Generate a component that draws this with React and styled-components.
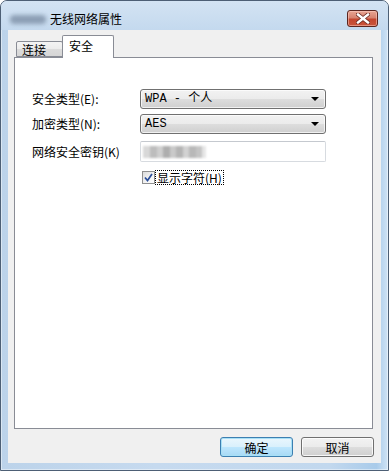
import React from "react";
import styled, { createGlobalStyle } from "styled-components";

const Global = createGlobalStyle`
  html, body { margin: 0; padding: 0; background: #ffffff; }
  body { font-family: "Noto Sans CJK SC", "Liberation Sans", sans-serif; font-size: 12px; }
`;

const Window = styled.div`
  box-sizing: border-box;
  width: 389px;
  height: 471px;
  border: 1px solid #4d5f75;
  border-radius: 7px 7px 0 0;
  background: linear-gradient(90deg, #bcd3ea 0%, #c6daef 40%, #c2d8ee 85%, #a9cbea 97%, #cfe3f5 100%);
  display: flex;
  flex-direction: column;
  overflow: hidden;
  box-shadow: inset 0 0 0 1px rgba(255,255,255,0.45);
`;

const TitleBar = styled.div`
  height: 29px;
  box-sizing: border-box;
  padding: 9px 10px 0 9px;
  display: flex;
  align-items: flex-start;
  background: linear-gradient(180deg, #d3e3f3 0%, #c4d9ee 100%);
`;

const BlurName = styled.span`
  width: 36px;
  height: 9px;
  margin-top: 5px;
  margin-right: 4px;
  border-radius: 4px;
  background: #7d8fa6;
  filter: blur(2px);
  opacity: 0.8;
`;

const Title = styled.span`
  font-size: 12px;
  line-height: 18px;
  color: #000;
`;

const CloseBtn = styled.div`
  margin-left: auto;
  width: 31px;
  height: 17px;
  box-sizing: border-box;
  border: 1px solid #5b2620;
  border-radius: 3px;
  background: linear-gradient(180deg, #e8a593 0%, #d78370 45%, #c4462f 55%, #c9553c 100%);
  box-shadow: inset 0 0 0 1px rgba(255,210,200,0.5);
  display: flex;
  align-items: center;
  justify-content: center;
`;

const Client = styled.div`
  flex: 1;
  margin: 0 7px 7px 7px;
  background: #f0f0f0;
  display: flex;
  flex-direction: column;
  padding: 4px 8px 0 6px;
`;

const TabStrip = styled.div`
  display: flex;
  align-items: flex-end;
  padding-left: 2px;
  height: 23px;
  position: relative;
  z-index: 1;
`;

const Tab = styled.div`
  box-sizing: border-box;
  height: ${(p) => (p.$active ? "23px" : "16px")};
  width: ${(p) => p.$w}px;
  border: 1px solid #898c95;
  border-bottom: ${(p) => (p.$active ? "none" : "1px solid #898c95")};
  border-radius: 2px 2px 0 0;
  background: ${(p) =>
    p.$active ? "#ffffff" : "linear-gradient(180deg, #f4f4f4 0%, #ececec 50%, #dcdcdc 51%, #d6d6d6 100%)"};
  margin-bottom: ${(p) => (p.$active ? "-1px" : "0")};
  padding-left: ${(p) => p.$pl}px;
  font-size: 12px;
  line-height: ${(p) => (p.$active ? "19px" : "16px")};
  color: #000;
  margin-right: ${(p) => (p.$active ? "0" : "-1px")};
`;

const Panel = styled.div`
  box-sizing: border-box;
  height: 372px;
  border: 1px solid #898c95;
  background: #ffffff;
  padding: 31px 0 0 17px;
`;

const Form = styled.div`
  display: grid;
  grid-template-columns: 108px 186px;
  row-gap: 5px;
  align-items: center;
`;

const Label = styled.span`
  font-size: 12px;
  color: #000;
  line-height: 16px;
  margin-top: ${(p) => p.$mt || 0}px;
`;

const Combo = styled.div`
  box-sizing: border-box;
  height: 20px;
  border: 1px solid #707070;
  border-radius: 3px;
  background: linear-gradient(180deg, #f2f2f2 0%, #ebebeb 50%, #dddddd 51%, #cfcfcf 100%);
  box-shadow: inset 0 0 0 1px rgba(255,255,255,0.7);
  display: flex;
  align-items: center;
  padding: 0 4px 0 4px;
  font-family: "Liberation Mono", "Noto Sans CJK SC", monospace;
  font-size: 12px;
  color: #000;
`;

const ComboText = styled.span`
  flex: 1;
  line-height: 16px;
`;

const Arrow = styled.span`
  width: 0;
  height: 0;
  border-left: 4px solid transparent;
  border-right: 4px solid transparent;
  border-top: 4px solid #000;
  margin-right: 2px;
`;

const TextBox = styled.div`
  box-sizing: border-box;
  height: 21px;
  margin-top: 2px;
  border: 1px solid #d7dbe0;
  border-top-color: #c5c9cf;
  border-radius: 2px;
  background: #fff;
  display: flex;
  align-items: center;
  padding-left: 2px;
`;

const Pixel = styled.span`
  width: ${(p) => p.$w}px;
  height: 12px;
  background: ${(p) => p.$c};
`;

const PixelRow = styled.div`
  display: flex;
  filter: blur(1.2px);
`;

const CheckRow = styled.div`
  grid-column: 2;
  display: flex;
  align-items: center;
  margin-top: 3px;
  padding-left: 2px;
  height: 15px;
`;

const CheckBox = styled.div`
  box-sizing: border-box;
  width: 13px;
  height: 13px;
  border: 1px solid #8f8f8f;
  background: linear-gradient(135deg, #dcdcdc 0%, #f4f4f4 60%, #ffffff 100%);
  display: flex;
  align-items: center;
  justify-content: center;
  margin-right: 1px;
`;

const CheckLabel = styled.span`
  font-size: 12px;
  line-height: 13px;
  padding: 0 1px;
  outline: 1px dotted #000;
  outline-offset: 0;
  color: #000;
`;

const Buttons = styled.div`
  display: flex;
  justify-content: flex-end;
  gap: 8px;
  margin-top: 8px;
  margin-right: -1px;
`;

const Button = styled.div`
  box-sizing: border-box;
  width: 73px;
  height: 20px;
  border: 1px solid ${(p) => (p.$default ? "#3c7fb1" : "#707070")};
  border-radius: 3px;
  background: ${(p) =>
    p.$default
      ? "linear-gradient(180deg, #eaf6fd 0%, #d9f0fc 50%, #bee6fd 51%, #a7d9f5 100%)"
      : "linear-gradient(180deg, #f2f2f2 0%, #ebebeb 50%, #dddddd 51%, #cfcfcf 100%)"};
  box-shadow: inset 0 0 0 1px ${(p) => (p.$default ? "#a8e0f6" : "rgba(255,255,255,0.8)")};
  display: flex;
  align-items: center;
  justify-content: center;
  font-size: 12px;
  color: #000;
`;

export default function App() {
  const pixels = [
    ["#d8d8d8", 7], ["#bdbdbd", 7], ["#cfcfcf", 6], ["#aeaeae", 7],
    ["#c9c9c9", 6], ["#b4b4b4", 7], ["#d2d2d2", 6], ["#b8b8b8", 7],
    ["#c4c4c4", 6], ["#e6e6e6", 4],
  ];
  return (
    <>
      <Global />
      <Window>
        <TitleBar>
          <BlurName />
          <Title>无线网络属性</Title>
          <CloseBtn>
            <svg width="14" height="11" viewBox="0 0 14 11">
              <path d="M2 1.5 L12 9.5 M12 1.5 L2 9.5" stroke="#6b2a22" strokeWidth="4" strokeLinecap="square" />
              <path d="M2 1.5 L12 9.5 M12 1.5 L2 9.5" stroke="#ffffff" strokeWidth="2.4" strokeLinecap="square" />
            </svg>
          </CloseBtn>
        </TitleBar>
        <Client>
          <TabStrip>
            <Tab $w={47} $pl={5}>连接</Tab>
            <Tab $w={52} $pl={6} $active>安全</Tab>
          </TabStrip>
          <Panel>
            <Form>
              <Label>安全类型(E):</Label>
              <Combo>
                <ComboText>WPA - 个人</ComboText>
                <Arrow />
              </Combo>
              <Label>加密类型(N):</Label>
              <Combo>
                <ComboText>AES</ComboText>
                <Arrow />
              </Combo>
              <Label $mt={2}>网络安全密钥(K)</Label>
              <TextBox>
                <PixelRow>
                  {pixels.map(([c, w], i) => (
                    <Pixel key={i} $c={c} $w={w} />
                  ))}
                </PixelRow>
              </TextBox>
              <CheckRow>
                <CheckBox>
                  <svg width="9" height="9" viewBox="0 0 9 9">
                    <path d="M1 4.5 L3.5 7.5 L8 1" stroke="#2a4e9a" strokeWidth="1.7" fill="none" />
                  </svg>
                </CheckBox>
                <CheckLabel>显示字符(H)</CheckLabel>
              </CheckRow>
            </Form>
          </Panel>
          <Buttons>
            <Button $default>确定</Button>
            <Button>取消</Button>
          </Buttons>
        </Client>
      </Window>
    </>
  );
}
